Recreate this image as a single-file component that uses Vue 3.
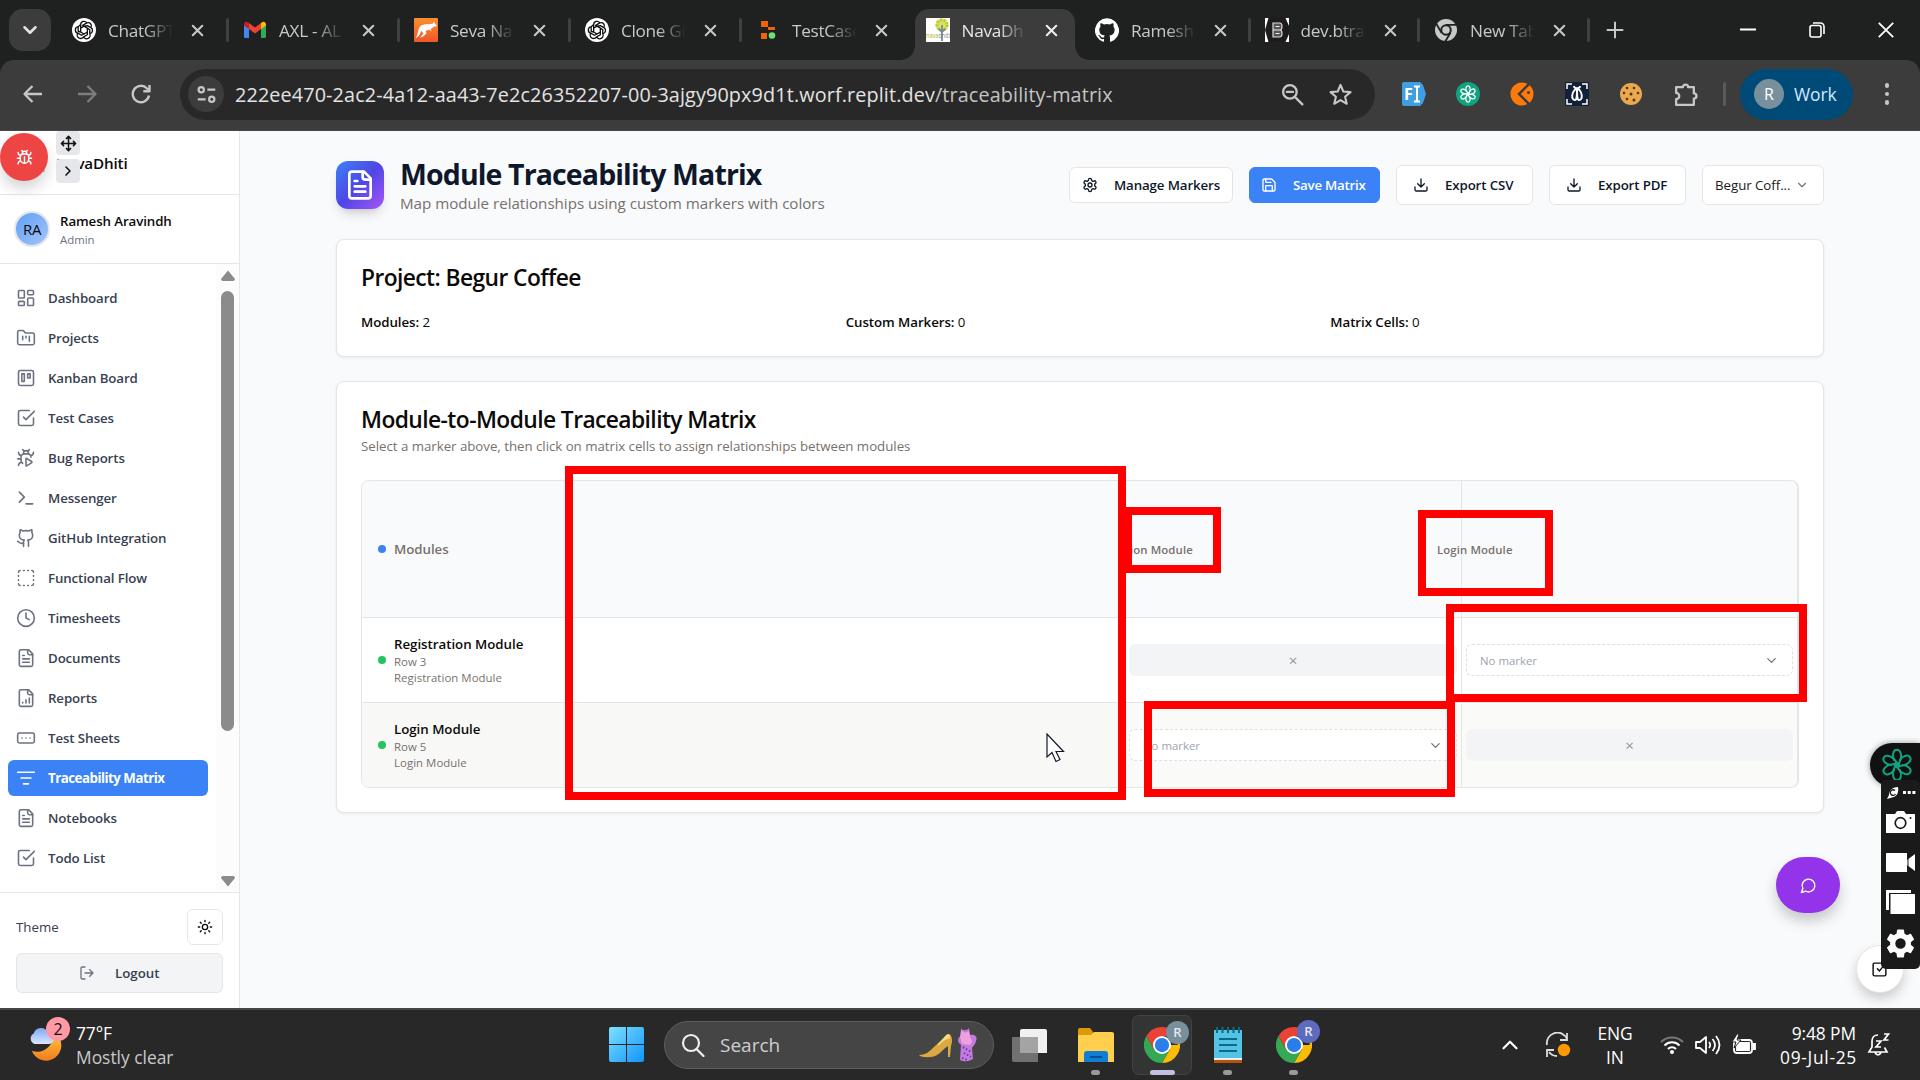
<script setup>
import { h } from 'vue'

const paths = {
  dashboard: '<rect width="7" height="9" x="3" y="3" rx="1"/><rect width="7" height="5" x="14" y="3" rx="1"/><rect width="7" height="9" x="14" y="12" rx="1"/><rect width="7" height="5" x="3" y="16" rx="1"/>',
  projects: '<path d="M4 20h16a2 2 0 0 0 2-2V8a2 2 0 0 0-2-2h-7.93a2 2 0 0 1-1.66-.9l-.82-1.2A2 2 0 0 0 7.93 3H4a2 2 0 0 0-2 2v13c0 1.1.9 2 2 2Z"/><path d="M8 10v4M12 10v2M16 10v6"/>',
  kanban: '<rect width="18" height="18" x="3" y="3" rx="2"/><rect width="3" height="9" x="7" y="7"/><rect width="3" height="5" x="14" y="7"/>',
  check: '<path d="m9 11 3 3L22 4"/><path d="M21 12v7a2 2 0 0 1-2 2H5a2 2 0 0 1-2-2V5a2 2 0 0 1 2-2h11"/>',
  bugplay: '<path d="M12.765 21.522a.5.5 0 0 1-.765-.424v-8.196a.5.5 0 0 1 .765-.424l5.878 3.674a1 1 0 0 1 0 1.696z"/><path d="M14.12 3.88 16 2M18 11a4 4 0 0 0-4-4h-4a4 4 0 0 0-4 4v3a6.1 6.1 0 0 0 2 4.5M20.97 5c0 2.1-1.6 3.8-3.5 4M3 21c0-2.1 1.7-3.9 3.8-4M6 13H2M6.53 9C4.6 8.8 3 7.1 3 5m5-3 1.88 1.88M9 7.13v-1a3 3 0 1 1 6 0v1"/>',
  messenger: '<path d="m4 17 6-6-6-6M12 19h8"/>',
  github: '<path d="M15 22v-4a4.8 4.8 0 0 0-1-3.5c3 0 6-2 6-5.500.08-1.250-.27-2.480-1-3.500.28-1.150.28-2.350 0-3.500 0 0-1 0-3 1.500-2.640-.5-5.360-.5-8 0C6 2 5 2 5 2c-.3 1.150-.3 2.350 0 3.500A5.400 5.400 0 0 0 4 9c0 3.500 3 5.500 6 5.500-.39.49-.68 1.050-.85 1.650S8.930 17.380 9 18v4"/><path d="M9 18c-4.510 2-5-2-7-2"/>',
  flow: '<path d="M5 3a2 2 0 0 0-2 2M19 3a2 2 0 0 1 2 2M21 19a2 2 0 0 1-2 2M5 21a2 2 0 0 1-2-2M9 3h1M9 21h1M14 3h1M14 21h1M3 9v1M21 9v1M3 14v1M21 14v1"/>',
  clock: '<circle cx="12" cy="12" r="10"/><path d="M12 6v6l4 2"/>',
  doc: '<path d="M15 2H6a2 2 0 0 0-2 2v16a2 2 0 0 0 2 2h12a2 2 0 0 0 2-2V7Z"/><path d="M14 2v4a2 2 0 0 0 2 2h4M10 9H8M16 13H8M16 17H8"/>',
  report: '<path d="M15 2H6a2 2 0 0 0-2 2v16a2 2 0 0 0 2 2h12a2 2 0 0 0 2-2V7Z"/><path d="M14 2v4a2 2 0 0 0 2 2h4M8 18v-1M12 18v-4M16 18v-6"/>',
  sheets: '<rect width="20" height="12" x="2" y="6" rx="2"/><path d="M12 12h.01M17 12h.01M7 12h.01"/>',
  matrix: '<path d="M2 5h20M6 12h12M9 19h6"/>',
  bug: '<path d="m8 2 1.880 1.880M14.120 3.880 16 2M9 7.130v-1a3 3 0 1 1 6 0v1M12 20c-3.300 0-6-2.700-6-6v-3a4 4 0 0 1 4-4h4a4 4 0 0 1 4 4v3c0 3.300-2.700 6-6 6M12 20v-9M6.530 9C4.600 8.800 3 7.100 3 5M6 13H2M3 21c0-2.100 1.700-3.900 3.800-4M20.970 5c0 2.100-1.600 3.800-3.500 4M22 13h-4M17.200 17c2.100.1 3.800 1.900 3.800 4"/>',
  move: '<path d="M12 2v20M15 19l-3 3-3-3M19 9l3 3-3 3M2 12h20M5 9l-3 3 3 3M9 5l3-3 3 3"/>',
  right: '<path d="m9 18 6-6-6-6"/>',
  down: '<path d="m6 9 6 6 6-6"/>',
  up: '<path d="m6 15 6-6 6 6"/>',
  x: '<path d="M18 6 6 18M6 6l12 12"/>',
  plus: '<path d="M3 12h18M12 3v18"/>',
  sun: '<circle cx="12" cy="12" r="4"/><path d="M12 2v2M12 20v2M4.930 4.930l1.410 1.410M17.660 17.660l1.410 1.410M2 12h2M20 12h2M6.340 17.660l-1.410 1.410M19.070 4.930l-1.410 1.410"/>',
  logout: '<path d="M9 21H5a2 2 0 0 1-2-2V5a2 2 0 0 1 2-2h4M16 17l5-5-5-5M21 12H9"/>',
  gear: '<path d="M12.220 2h-.44a2 2 0 0 0-2 2v.18a2 2 0 0 1-1 1.730l-.43.25a2 2 0 0 1-2 0l-.15-.08a2 2 0 0 0-2.730.73l-.22.38a2 2 0 0 0 .73 2.730l.15.1a2 2 0 0 1 1 1.720v.51a2 2 0 0 1-1 1.740l-.15.09a2 2 0 0 0-.73 2.730l.22.38a2 2 0 0 0 2.730.73l.15-.08a2 2 0 0 1 2 0l.43.25a2 2 0 0 1 1 1.730V20a2 2 0 0 0 2 2h.44a2 2 0 0 0 2-2v-.18a2 2 0 0 1 1-1.730l.43-.25a2 2 0 0 1 2 0l.15.08a2 2 0 0 0 2.730-.73l.22-.39a2 2 0 0 0-.73-2.730l-.15-.08a2 2 0 0 1-1-1.740v-.5a2 2 0 0 1 1-1.740l.15-.09a2 2 0 0 0 .73-2.730l-.22-.38a2 2 0 0 0-2.730-.73l-.15.08a2 2 0 0 1-2 0l-.43-.25a2 2 0 0 1-1-1.730V4a2 2 0 0 0-2-2z"/><circle cx="12" cy="12" r="3"/>',
  save: '<path d="M15.200 3a2 2 0 0 1 1.400.6l3.800 3.800a2 2 0 0 1 .6 1.400V19a2 2 0 0 1-2 2H5a2 2 0 0 1-2-2V5a2 2 0 0 1 2-2z"/><path d="M17 21v-7a1 1 0 0 0-1-1H8a1 1 0 0 0-1 1v7M7 3v4a1 1 0 0 0 1 1h7"/>',
  download: '<path d="M21 15v4a2 2 0 0 1-2 2H5a2 2 0 0 1-2-2v-4M7 10l5 5 5-5M12 15V3"/>',
  chat: '<path d="M7.900 20A9 9 0 1 0 4 16.100L2 22Z"/>',
  todo: '<rect x="3" y="3" width="18" height="18" rx="2"/><path d="m9 11 3 3 4-5"/>',
  back: '<path d="M21 12H4M11.500 4 3.500 12l8 8"/>',
  forward: '<path d="M3 12h17M12.500 4l8 8-8 8"/>',
  reload: '<path d="M20 13.500A8.200 8.200 0 1 1 18 6.500L20.500 9M20.500 3v6.200h-6.200"/>',
  tune: '<circle cx="6" cy="6.500" r="3"/><path d="M13 6.500h9M2 17.500h9"/><circle cx="18" cy="17.500" r="3"/>',
  lens: '<circle cx="9.500" cy="9.500" r="6.500"/><path d="m14.500 14.500 7 7M6.500 9.500h6"/>',
  star: '<path d="m12 2.800 2.700 6.300 6.900.6-5.200 4.500 1.600 6.700-6-3.600-6 3.600 1.600-6.700-5.200-4.500 6.900-.6z"/>',
  puzzle: '<path d="M3 5h6.500a2.500 2.500 0 0 1 5 0H20v6a2.500 2.500 0 0 1 0 5v6H3v-5.500a3 3 0 0 0 0-6z"/>',
  search: '<circle cx="10" cy="10" r="8"/><path d="m15.500 16 7 7"/>',
  openai: '<path d="M8 9.700V5.500a4 4 0 0 1 7.400-2l-5 2.900M8 9.700l4-2.400 4 2.400v4.700l-4 2.400-4-2.400zM15.400 3.500a4 4 0 0 1 5 5.700L16 6.700l-4 .6M20.400 9.200a4 4 0 0 1-1.500 7.300v-4.800L16 9.700M18.900 16.500a4 4 0 0 1-7.400 3.800l4.500-2.600v-3.300M11.500 20.300a4 4 0 0 1-7-4.500l4.500 2.500 3-1.500M4.500 15.800A4 4 0 0 1 5 8v5.500l3 1M5 8l3-2.500"/>',
  petals: [0, 60, 120, 180, 240, 300].map((a) => `<path d="M10 8.500C8.300 5 9.300 1.300 12 1.300c2.400 0 3.400 3.200 2.600 6.700l-1 2.600" transform="rotate(${a} 12 12)"/>`).join('') + '<circle cx="12" cy="12" r="1.600" fill="currentColor"/>',
}

const Icon = (p) =>
  h('svg', {
    width: p.size, height: p.size, viewBox: '0 0 24 24', fill: 'none', stroke: 'currentColor',
    'stroke-width': p.sw || 2, 'stroke-linecap': p.cap || 'round', 'stroke-linejoin': 'round', innerHTML: paths[p.name],
  })
Icon.props = ['name', 'size', 'sw', 'cap']

const Chrome = (p) =>
  h('svg', {
    width: p.size, height: p.size, viewBox: '0 0 48 48',
    innerHTML: p.mono
      ? '<circle cx="24" cy="24" r="22" fill="#c7c9c8"/><circle cx="24" cy="24" r="11.500" fill="#1f2120"/><circle cx="24" cy="24" r="7.500" fill="#c7c9c8"/><path d="M24 13.500h21M15 29.500 4.500 11.500M33 29.500 22.500 47" stroke="#1f2120" stroke-width="3.500"/>'
      : '<path d="M24 24h20.800L44.800 12A24 24 0 0 1 24 48l10.400-18z" fill="#fbbc04"/><path d="M24 24 34.400 30 24 48A24 24 0 0 1 3.200 12l10.400 18z" fill="#34a853"/><path d="M3.200 12A24 24 0 0 1 44.800 12H24v12L13.600 30z" fill="#ea4335"/><circle cx="24" cy="24" r="12" fill="#fff"/><circle cx="24" cy="24" r="9.500" fill="#2b7de9"/>',
  })
Chrome.props = ['size', 'mono']

const tabs = [
  { icon: 'gpt', label: 'ChatGPT' },
  { icon: 'gmail', label: 'AXL - AL' },
  { icon: 'kangaroo', label: 'Seva Na' },
  { icon: 'gpt', label: 'Clone Gi' },
  { icon: 'replit', label: 'TestCase', bare: true },
  { icon: 'nava', label: 'NavaDh', active: true },
  { icon: 'gh', label: 'Ramesh' },
  { icon: 'dev', label: 'dev.btra' },
  { icon: 'chrome', label: 'New Tab' },
]
const nav = [
  ['dashboard', 'Dashboard'], ['projects', 'Projects'], ['kanban', 'Kanban Board'], ['check', 'Test Cases'],
  ['bugplay', 'Bug Reports'], ['messenger', 'Messenger'], ['github', 'GitHub Integration'], ['flow', 'Functional Flow'],
  ['clock', 'Timesheets'], ['doc', 'Documents'], ['report', 'Reports'], ['sheets', 'Test Sheets'],
  ['matrix', 'Traceability Matrix'], ['doc', 'Notebooks'], ['check', 'Todo List'],
]
const rows = [
  { name: 'Registration Module', row: 'Row 3', self: 0 },
  { name: 'Login Module', row: 'Row 5', self: 1 },
]
const stats = [['Modules:', 2], ['Custom Markers:', 0], ['Matrix Cells:', 0]]
</script>

<template>
  <div class="screen">
    <header class="tabstrip">
      <button class="tab-search"><Icon name="down" size="22" sw="2.800" /></button>
      <div class="tabs">
        <div v-for="t in tabs" :key="t.label" class="tab" :class="{ active: t.active, bare: t.bare || t.active }">
          <span class="fav">
            <span v-if="t.icon === 'gpt'" class="gpt"><Icon name="openai" size="20" sw="1.600" /></span>
            <svg v-else-if="t.icon === 'gmail'" width="24" height="24" viewBox="0 0 24 24"><path d="M1 6v12.500A1.500 1.500 0 0 0 2.500 20H6V9z" fill="#4285f4" /><path d="M23 6v12.500a1.500 1.500 0 0 1-1.500 1.500H18V9z" fill="#34a853" /><path d="M6 5v6l6 4.500 6-4.500V5l-6 4.500z" fill="#ea4335" /><path d="M1 6.500C1 4 3.500 3.100 5.300 4.500L6 5v6L1 7.500z" fill="#c5221f" /><path d="M23 6.500c0-2.500-2.500-3.400-4.300-2L18 5v6l5-3.500z" fill="#fbbc04" /></svg>
            <svg v-else-if="t.icon === 'kangaroo'" width="24" height="24" viewBox="0 0 24 24"><defs><linearGradient id="kg" x1="0" y1="0" x2="0" y2="1"><stop stop-color="#f9902f" /><stop offset="1" stop-color="#f0562a" /></linearGradient></defs><rect width="24" height="24" rx="1" fill="url(#kg)" /><path d="M1.500 20C4.500 17 3.500 10 7 7.500 11 5 15 7 19 5.500L20 3.500l.8 2 2.200 2.200c-.8 1-2.300.5-3.300 1-.7 1-2.200 1.500-3 2.300l.8 2.500-2-1.800c-1.500.3-3 .5-4 2l1.200 1.500-3.200 3-3.500 1.500 2-2.500 1.500-2c-1-.5-1.800-1.500-2.300-2.700C6.200 15.500 5 19 1.500 20z" fill="#fff" /></svg>
            <svg v-else-if="t.icon === 'replit'" width="24" height="24" viewBox="0 0 24 24"><path d="M5 3h7v6H5zM12 9h7v3h-7zM5 15h6v6H5z" fill="#f26207" /><circle cx="16" cy="17.500" r="3.300" fill="#6be07a" /></svg>
            <svg v-else-if="t.icon === 'nava'" width="24" height="24" viewBox="0 0 24 24"><path fill="#fff" d="M0 0h24v24H0z" /><circle cx="16" cy="7" r="6.500" fill="#d9e36a" /><circle cx="16" cy="7" r="5" fill="none" stroke="#b9c92e" stroke-dasharray="2 1.500" stroke-width="3" /><path d="M16 7v16M13 11l3 3 3-3" stroke="#7c8794" stroke-width="1.800" fill="none" /><text x="0" y="20" font-size="7" textLength="24" lengthAdjust="spacingAndGlyphs" fill="#a4b52a">nava<tspan fill="#7c8794">dhiti</tspan></text></svg>
            <svg v-else-if="t.icon === 'gh'" width="24" height="24" viewBox="0 0 24 24"><path fill="#fff" d="M12 .3a12 12 0 0 0-3.800 23.400c.6.1.8-.3.8-.6v-2c-3.300.7-4-1.600-4-1.600-.6-1.400-1.400-1.800-1.400-1.800-1-.7.1-.7.1-.7 1.200 0 1.900 1.200 1.900 1.200 1 1.800 2.800 1.300 3.500 1 0-.8.4-1.300.7-1.600-2.700-.3-5.500-1.300-5.500-6 0-1.200.5-2.300 1.300-3.100-.2-.4-.6-1.600 0-3.200 0 0 1-.3 3.400 1.200a11.500 11.500 0 0 1 6 0c2.300-1.500 3.300-1.200 3.300-1.200.6 1.600.2 2.800 0 3.200.9.8 1.300 1.900 1.300 3.200 0 4.600-2.800 5.600-5.500 5.900.5.4.9 1 .9 2.200v3.300c0 .3.1.7.8.6A12 12 0 0 0 12 .3" /></svg>
            <svg v-else-if="t.icon === 'dev'" width="24" height="24" viewBox="0 0 24 24"><path fill="#fff" d="M0 0h24v24H0z" /><path d="M3.500 0h17L24 8v8l-3.500 8h-17L0 12z" fill="#1d1b1c" /><path d="M8 5h6.500q2.500 0 2.500 3.500t-2 3.500q2 0 2 3.500T14.500 19H8z" fill="#555" stroke="#ddd" stroke-width="1.200" /><path d="M10.500 8.500h4M10.500 15.500h4M8 12h7" stroke="#eee" stroke-width="1.200" /></svg>
            <Chrome v-else :size="24" :mono="true" />
          </span>
          <span class="tab-label">{{ t.label }}</span>
          <Icon class="tab-x" name="x" size="19" sw="2.600" />
        </div>
      </div>
      <Icon class="newtab" name="plus" size="20" sw="2.400" />
      <div class="winctl">
        <svg width="16" height="16"><path d="M0 7.500h16" stroke="#fff" stroke-width="2" /></svg>
        <svg width="16" height="16" fill="none" stroke="#fff" stroke-width="1.600"><rect x="1" y="3.500" width="11" height="11.500" rx="2" /><path d="M4 1h7.500a3.500 3.500 0 0 1 3.500 3.500V12" /></svg>
        <svg width="16" height="16"><path d="m.8.8 14.400 14.400M15.200.8.8 15.200" stroke="#fff" stroke-width="1.800" /></svg>
      </div>
    </header>

    <div class="toolbar">
      <div class="navbtns">
        <Icon name="back" size="24" sw="2.300" cap="butt" />
        <Icon class="dim" name="forward" size="24" sw="2.300" cap="butt" />
        <Icon name="reload" size="24" sw="2.400" cap="butt" />
      </div>
      <div class="omnibox">
        <span class="siteinfo"><Icon name="tune" size="21" sw="2.500" cap="butt" /></span>
        <span class="url">222ee470-2ac2-4a12-aa43-7e2c26352207-00-3ajgy90px9d1t.worf.replit.dev<i>/traceability-matrix</i></span>
        <Icon class="lens" name="lens" size="25" sw="2.200" />
        <Icon name="star" size="25" sw="2" />
      </div>
      <div class="exts">
        <svg width="24" height="24" viewBox="0 0 24 24"><path d="M2 0h16l3 3 3 9-3 9-3 3H2a2 2 0 0 1-2-2V2a2 2 0 0 1 2-2z" fill="#3f9fe0" /><text x="2" y="18" font-size="16" font-weight="700" fill="#fff">F</text><path d="M12 4.500h6M12 19.500h6M15 4.500v15" stroke="#fff" stroke-width="2" /></svg>
        <span class="ext-gpt"><Icon name="petals" size="18" sw="1.700" /></span>
        <svg width="24" height="24" viewBox="0 0 24 24"><circle cx="12" cy="12" r="11.500" fill="#ff7a0a" /><path d="M19 2 9 12l10 10" fill="none" stroke="#3c3c3c" stroke-width="2.500" /><circle cx="18.500" cy="10.500" r="1.500" fill="#3c3c3c" /></svg>
        <svg width="24" height="24" viewBox="0 0 24 24" fill="none" stroke="#fff" stroke-width="1.500"><path d="M0 0h24v24H0z" fill="#13203a" stroke="none" /><path d="M2 7V2h5M17 2h5v5M22 17v5h-5M7 22H2v-5" /><path d="M9 4c0 3 6 3 6 0M12 6c-6 4-6 12-2 12 2 0 2-5 2-12 0 7 0 12 2 12 4 0 4-8-2-12" stroke-width="1.900" /></svg>
        <svg width="24" height="24" viewBox="0 0 24 24"><circle cx="12" cy="12" r="11" fill="#e9a94c" /><g fill="#5d2f12"><circle cx="8" cy="6" r="1.300" /><circle cx="15" cy="6" r="1.300" /><circle cx="5" cy="11" r="1.300" /><circle cx="12" cy="12" r="1.500" /><circle cx="19" cy="11" r="1.300" /><circle cx="8" cy="17" r="1.300" /><circle cx="15" cy="18" r="1.500" /></g></svg>
        <Icon name="puzzle" size="25" sw="2.200" />
      </div>
      <i class="vsep" />
      <div class="profile"><b>R</b>Work</div>
      <div class="kebab"><i /><i /><i /></div>
    </div>

    <div class="page">
      <aside class="sidebar">
        <div class="brand"><small>iti</small><strong>NavaDhiti</strong></div>
        <div class="user">
          <span class="avatar">RA</span>
          <div><strong>Ramesh Aravindh</strong><small>Admin</small></div>
        </div>
        <div class="navwrap">
          <nav>
            <a v-for="n in nav" :key="n[1]" :class="{ on: n[0] === 'matrix' }"><Icon :name="n[0]" size="20" sw="1.900" /><span>{{ n[1] }}</span></a>
          </nav>
          <div class="scrollbar">
            <svg width="14" height="11"><path d="M7 .5 14 9q0 2-2 2H2Q0 11 0 9z" fill="#8b8b8b" /></svg>
            <i />
            <svg width="14" height="11"><path d="M7 10.500 14 2q0-2-2-2H2Q0 0 0 2z" fill="#8b8b8b" /></svg>
          </div>
        </div>
        <div class="sidefoot">
          <div class="theme"><span>Theme</span><button><Icon name="sun" size="16" /></button></div>
          <button class="logout"><Icon name="logout" size="16" /><span>Logout</span></button>
        </div>
      </aside>

      <main>
        <div class="head">
          <span class="logo"><Icon name="doc" size="32" sw="2" /></span>
          <div class="titles"><h1>Module Traceability Matrix</h1><p>Map module relationships using custom markers with colors</p></div>
          <div class="actions">
            <button class="b1"><Icon name="gear" size="16" /><span>Manage Markers</span></button>
            <button class="b2"><Icon name="save" size="16" /><span>Save Matrix</span></button>
            <button class="b3"><Icon name="download" size="16" /><span>Export CSV</span></button>
            <button class="b3"><Icon name="download" size="16" /><span>Export PDF</span></button>
            <button class="sel"><span>Begur Coff...</span><Icon name="down" size="14" /></button>
          </div>
        </div>

        <section class="card c1">
          <h2>Project: Begur Coffee</h2>
          <div class="stats"><span v-for="s in stats" :key="s[0]"><b>{{ s[0] }}</b> {{ s[1] }}</span></div>
        </section>

        <section class="card c2">
          <h2>Module-to-Module Traceability Matrix</h2>
          <p>Select a marker above, then click on matrix cells to assign relationships between modules</p>
          <div class="matrix">
            <div class="mrow mhead">
              <div class="mlabel"><i class="dot blue" /><span>Modules</span></div>
              <div class="mcell"><span class="h1c">ion Module</span></div>
              <div class="mcell"><span class="h2c">Login Module</span></div>
            </div>
            <div v-for="r in rows" :key="r.name" class="mrow">
              <div class="mlabel"><i class="dot" /><div><b>{{ r.name }}</b><small>{{ r.row }}</small><small>{{ r.name }}</small></div></div>
              <div v-for="c in 2" :key="c" class="mcell">
                <div v-if="r.self === c - 1" class="self">×</div>
                <div v-else class="pick"><span>No marker</span><Icon name="down" size="15" sw="2" /></div>
              </div>
            </div>
          </div>
        </section>
      </main>
    </div>

    <footer class="taskbar">
      <div class="weather">
        <svg width="40" height="42" viewBox="0 0 42 42"><defs><linearGradient id="mo" x1="0" y1="0" x2="0" y2="1"><stop stop-color="#ffc93c" /><stop offset="1" stop-color="#f07b1d" /></linearGradient><linearGradient id="cl" x1="0" y1="0" x2="0" y2="1"><stop stop-color="#7fa8f5" /><stop offset="1" stop-color="#dbe8ff" /></linearGradient></defs><path d="M29 9A16 16 0 1 1 4 27c11 4 21-3 25-18z" fill="url(#mo)" /><path d="M7 20a6 6 0 0 1-1-11 8 8 0 0 1 15-1 6 6 0 0 1 1 12z" fill="url(#cl)" /></svg>
        <b class="wbadge">2</b>
        <div class="wtext"><span>77°F</span><span>Mostly clear</span></div>
      </div>
      <svg class="win" width="35" height="35" viewBox="0 0 35 35"><defs><linearGradient id="wi" x1="0" y1="0" x2="1" y2="1"><stop stop-color="#7fe0ff" /><stop offset="1" stop-color="#0f95fb" /></linearGradient></defs><path d="M2 0h15v17H0V2Q0 0 2 0zM18 0h15q2 0 2 2v15H18zM0 18h17v17H2q-2 0-2-2zM18 18h17v15q0 2-2 2H18z" fill="url(#wi)" /></svg>
      <div class="search">
        <Icon name="search" size="24" sw="2.200" /><span>Search</span>
        <svg width="60" height="36" viewBox="0 0 60 36"><path d="M1 28c7 0 11-4 16-9C23 14 28 7 31 7c3 1 4 7 2 12l-1 11h-2V19c-4 2-7 7-11 9-4 3-16 3-18 0z" fill="#dba941" /><path d="M20 17c5-4 8-10 10-10 2 1 2 3 2 5-4-1-8 4-12 7z" fill="#f4d98b" /><path d="M43 1c1 3 6 3 8 0l1 7c5-1 8 2 6 6-1 4-3 5-4 7l1 11q-7 4-13 1l1-15c-4-3-4-7 0-9z" fill="#c47be0" /><path d="M43 3c2 3 6 3 8 1l1 6c2 3 3 5 0 8l-8-1-2-7z" fill="#efa0dd" /><path d="m45 20 8 5M46 26l7 4M44 31l6 2" stroke="#6d38a0" stroke-width="2" stroke-dasharray="1.500 2" /></svg>
      </div>
      <div class="apps">
        <span class="app"><svg width="38" height="36" viewBox="0 0 38 36"><path d="M11 2h23a2 2 0 0 1 2 2v22H9V4q0-2 2-2z" fill="#f1f1f1" /><path d="M2 10h25v17H27v8H3q-2 0-2-2V11q0-1 1-1z" fill="#8a8a8a" opacity=".75" /></svg></span>
        <span class="app"><svg width="38" height="36" viewBox="0 0 38 36"><path d="M1 3q0-2 2-2h10l3 4v6H1z" fill="#dc9a06" /><path d="M1 8h13l3-3h18q2 0 2 2v28H1z" fill="#ffcf4d" /><path d="M7 35V27q0-3 3-3h18q3 0 3 3v8z" fill="#0f7fd6" /><path d="M13 30h12" stroke="#0a4f92" stroke-width="2" /></svg><i class="run" /></span>
        <span class="app live"><Chrome :size="36" /><b class="pb grey">R</b><i class="run" /></span>
        <span class="app"><svg width="30" height="38" viewBox="0 0 30 38"><path d="M1 4h28v28H1z" fill="#55c3e3" /><path d="M1 32h28v2H1z" fill="#eee" /><path d="M1 34h28v2q0 1-1 1H2q-1 0-1-1z" fill="#b5540f" /><path d="M6 13h18M6 19h18M6 25h18" stroke="#0b6a8c" stroke-width="2.200" /><path d="M4 1v6M9.500 1v6M15 1v6M20.500 1v6M26 1v6" stroke="#0b6a8c" stroke-width="2" /></svg><i class="run" /></span>
        <span class="app"><Chrome :size="36" /><b class="pb indigo">R</b><i class="run" /></span>
      </div>
      <div class="tray">
        <Icon class="t-up" name="up" size="26" sw="2" />
        <svg class="t-sync" width="26" height="26" viewBox="0 0 26 26" fill="none" stroke="#ddd" stroke-width="1.800"><path d="M2 13A10.500 10.500 0 0 1 22 7M22 1v7h-7M12 24a10 10 0 0 1-8-4M2 25v-7h7" /><circle cx="19" cy="18" r="6.200" fill="#ff9800" stroke="none" /></svg>
        <div class="lang"><span>ENG</span><span>IN</span></div>
        <svg class="t-wifi" width="24" height="20" viewBox="0 0 24 20" fill="none" stroke="#fff" stroke-width="2"><path d="M1 7a15.500 15.500 0 0 1 22 0" stroke="#777" /><path d="M4.500 10.500a10.500 10.500 0 0 1 15 0M8 14a5.500 5.500 0 0 1 8 0" /><circle cx="12" cy="17" r="2" fill="#fff" stroke="none" /></svg>
        <svg class="t-vol" width="26" height="22" viewBox="0 0 26 22" fill="none" stroke="#fff" stroke-width="1.800"><path d="M1 8v6h4l6 5V3L5 8z" stroke-linejoin="round" /><path d="M14 8q2.500 3 0 6M17.500 5q5 6 0 12M21 2q7 9 0 18" /></svg>
        <svg class="t-bat" width="26" height="22" viewBox="0 0 26 22" fill="none" stroke="#fff" stroke-width="1.800"><rect x="3" y="6" width="18" height="13" rx="3" /><path d="M6 9h12v7H6z" fill="#fff" /><path d="M22 10h2v5h-2" fill="#fff" /><path d="M6 0 1 8h4l-2 6 7-8H6l2-6z" fill="#fff" stroke="#282828" stroke-width="1" /></svg>
        <div class="time"><span>9:48 PM</span><span>09-Jul-25</span></div>
        <svg class="t-bell" width="24" height="26" viewBox="0 0 24 26" fill="none" stroke="#fff" stroke-width="1.700"><path d="M11 3C7 3 5 6 5 9v6l-3 5h18l-2.500-4.500M8 20.500q3 5 6 0" /><path d="M9 9h5l-5 6h5M17 2h4.500L17 8h4.500" /></svg>
      </div>
    </footer>

    <!-- floating widgets -->
    <span class="bugbtn"><Icon name="bug" size="17" sw="2" /></span>
    <span class="mini m1"><Icon name="move" size="17" sw="2.200" /></span>
    <span class="mini m2"><Icon name="right" size="16" sw="2.400" /></span>
    <span class="chatbtn"><Icon name="chat" size="17" sw="2" /></span>
    <span class="todobtn"><Icon name="todo" size="17" sw="2" /></span>
    <span class="gptpill"><Icon name="petals" size="34" sw="1.400" /></span>
    <div class="recorder">
      <svg width="30" height="14" viewBox="0 0 30 14"><path d="M1 13l2-4c0-5 4-8 9-8 1 5-1 10-6 10.500z" fill="#fff" /><path d="M9 4.500a2.800 2.800 0 1 0 .5 3.500" fill="none" stroke="#1a1a1a" stroke-width="1.300" /><path d="M17 5h3v3h-3zM21.700 5h3v3h-3zM26.400 5h3v3h-3z" fill="#fff" /></svg>
      <svg class="r1" width="29" height="22" viewBox="0 0 29 22"><path d="M0 3h9l2-3h7l2 3h9v19H0z" fill="#fff" /><circle cx="14.500" cy="12" r="5.300" fill="none" stroke="#1a1a1a" stroke-width="1.700" /><circle cx="24.500" cy="7" r="1" fill="#1a1a1a" /></svg>
      <svg class="r2" width="29" height="19" viewBox="0 0 29 19"><path d="M1 0h20v7l8-6v17l-8-6v7H1q-1 0-1-1V1q0-1 1-1z" fill="#fff" /><path d="M22 5v9" stroke="#1a1a1a" /></svg>
      <svg class="r3" width="29" height="24" viewBox="0 0 29 24"><path d="M0 0h25v3H3v17H0z" fill="#fff" /><path d="M4.500 4H29v20H4.500z" fill="#fff" /></svg>
      <svg class="r4" width="29" height="29" viewBox="2 2 20 20"><path fill="#fff" d="M19.140 12.940c.04-.3.06-.61.06-.94s-.02-.64-.07-.94l2.030-1.580a.49.49 0 0 0 .12-.61l-1.920-3.320a.49.49 0 0 0-.59-.22l-2.390.96c-.5-.38-1.030-.7-1.620-.94l-.36-2.540a.48.48 0 0 0-.48-.41h-3.840c-.24 0-.43.17-.47.41l-.36 2.540c-.59.24-1.130.57-1.620.94l-2.390-.96a.48.48 0 0 0-.59.22L2.740 8.870a.48.48 0 0 0 .12.61l2.030 1.580c-.05.3-.09.63-.09.94s.02.64.07.94l-2.030 1.580a.49.49 0 0 0-.12.61l1.920 3.320c.12.22.37.29.59.22l2.390-.96c.5.38 1.030.7 1.620.94l.36 2.540c.05.24.24.41.48.41h3.840c.24 0 .44-.17.47-.41l.36-2.540c.59-.24 1.130-.56 1.620-.94l2.390.96c.22.08.47 0 .59-.22l1.920-3.320a.48.48 0 0 0-.12-.61zM12 15.600a3.600 3.600 0 1 1 0-7.200 3.600 3.600 0 0 1 0 7.200z" /></svg>
    </div>

    <!-- annotations -->
    <i class="mark ma" /><i class="mark mb" /><i class="mark mc" /><i class="mark md" /><i class="mark me" />
    <svg class="cursor" width="19" height="30" viewBox="0 0 19 30"><path d="M1 1v23l5-4.500 4 9 4-2-4-8h7.500z" fill="#fff" stroke="#111827" stroke-width="1.200" /></svg>
  </div>
</template>

<style>
html, body { margin: 0; overflow: hidden; background: #282828; }
</style>

<style scoped>
* { box-sizing: border-box; }
svg { display: block; flex: none; }
button { font: inherit; margin: 0; padding: 0; border: 0; display: flex; align-items: center; }
i { font-style: normal; }
span, b, strong, small, h1, h2, p { white-space: nowrap; }
.screen { position: relative; width: 1920px; height: 1080px; display: flex; flex-direction: column; overflow: hidden; font-family: "Open Sans", "Noto Sans", sans-serif; color: #0c0a09; background: #1f2120; }

.tabstrip { height: 60px; flex: none; display: flex; align-items: center; padding-left: 9px; color: #c7c9c8; background: #1f2120; }
.tab-search { width: 42px; height: 42px; border-radius: 14px; background: #3c3c3c; color: #e3e3e3; justify-content: center; }
.tabs { display: flex; margin-left: 6px; height: 60px; }
.tab { position: relative; width: 171px; height: 60px; display: flex; align-items: center; padding-left: 15px; }
.tab:nth-child(n+5) { width: 169.500px; }
.tab:not(.bare)::after { content: ""; position: absolute; right: -1px; top: 18px; width: 3px; height: 24px; border-radius: 2px; background: #3f4140; }
.tab.active::before { content: ""; position: absolute; left: 4px; right: 5px; top: 9px; bottom: 0; background: #3c3c3c; border-radius: 14px 14px 0 0; }
.tab.active::after { content: ""; position: absolute; display: block; left: -10px; right: -9px; top: auto; width: auto; bottom: 0; height: 14px; border-radius: 0; background: radial-gradient(circle at 0 0, transparent 13.500px, #3c3c3c 14px) left / 14px 14px no-repeat, radial-gradient(circle at 100% 0, transparent 13.500px, #3c3c3c 14px) right / 14px 14px no-repeat; }
.tab > * { position: relative; z-index: 1; }
.fav { width: 24px; height: 24px; }
.gpt { width: 24px; height: 24px; border-radius: 50%; background: #fff; color: #111; display: flex; align-items: center; justify-content: center; }
.tab-label { width: 66px; margin-left: 12px; overflow: hidden; font-size: 17.200px; line-height: 26px; padding-top: 2px; letter-spacing: -.3px; -webkit-mask-image: linear-gradient(90deg, #000 55%, transparent 98%); mask-image: linear-gradient(90deg, #000 55%, transparent 98%); }
.active .tab-label { color: #e6e6e6; }
.tab-x { margin-left: 14px; }
.active .tab-x { color: #eee; }
.newtab { margin-left: 16px; }
.winctl { margin-left: auto; margin-right: 26px; display: flex; gap: 53px; }

.toolbar { height: 71px; flex: none; background: #3c3c3c; border-radius: 14px 14px 0 0; display: flex; align-items: center; padding: 0 0 2px 21px; color: #c7c7c7; border-bottom: 1px solid #48484a; }
.navbtns { display: flex; gap: 30px; }
.dim { color: #7d7d7d; }
.omnibox { margin-left: 27px; width: 1195px; height: 51px; border-radius: 26px; background: #282828; display: flex; align-items: center; padding: 0 22px 0 8px; }
.siteinfo { width: 36px; height: 36px; border-radius: 50%; background: #3c3c3c; display: flex; align-items: center; justify-content: center; }
.url { margin-left: 11px; font-size: 19.800px; color: #e3e3e3; flex: 1; letter-spacing: .13px; }
.url i { color: #c4c4c4; }
.lens { margin-right: 23px; }
.exts { display: flex; gap: 30.200px; margin-left: 27px; align-items: center; }
.ext-gpt { width: 24px; height: 24px; border-radius: 50%; background: #10a37f; color: #fff; display: flex; align-items: center; justify-content: center; }
.vsep { width: 3px; height: 24px; background: #5a5a5a; margin-left: 25px; border-radius: 2px; }
.profile { margin-left: 14px; width: 113px; height: 51px; border-radius: 26px; background: #004a77; color: #d3e8fb; font-size: 17.500px; display: flex; align-items: center; padding-left: 14px; letter-spacing: -.1px; }
.profile b { width: 30px; height: 30px; border-radius: 50%; background: #78909c; color: #fff; font-weight: 400; font-size: 16px; display: flex; align-items: center; justify-content: center; margin-right: 10px; }
.kebab { margin-left: 32px; display: flex; flex-direction: column; gap: 4px; }
.kebab i { width: 4.500px; height: 4.500px; border-radius: 50%; background: #c7c7c7; }

.page { height: 877px; flex: none; display: flex; background: #f8fafc; }
.sidebar { width: 240px; flex: none; background: #fff; border-right: 1px solid #e5e7eb; display: flex; flex-direction: column; }
.brand { height: 64px; flex: none; border-bottom: 1px solid #e5e7eb; display: flex; align-items: center; padding-left: 38px; }
.brand small { font-size: 8px; color: #6b7280; width: 18px; padding-top: 12px; }
.brand strong { font-size: 15.200px; font-weight: 600; letter-spacing: -.15px; }
.user { height: 69px; flex: none; border-bottom: 1px solid #e5e7eb; display: flex; align-items: center; padding-left: 14px; }
.avatar { width: 36px; height: 36px; border-radius: 50%; border: 2px solid #e5e7eb; background: linear-gradient(135deg, #60a0f5, #a5c4fb); display: flex; align-items: center; justify-content: center; font-size: 15px; letter-spacing: -.3px; }
.user div { margin-left: 10px; padding-top: 2px; }
.user strong { display: block; font-size: 13.300px; font-weight: 600; line-height: 18px; letter-spacing: -.1px; }
.user small { display: block; font-size: 11.400px; color: #6b7280; line-height: 19px; }
.navwrap { flex: none; height: 628px; display: flex; justify-content: space-between; }
nav { padding: 16px 0 0 8px; }
nav a { width: 200px; height: 36px; margin-bottom: 4px; border-radius: 6px; display: flex; align-items: center; padding-left: 8px; color: #374151; font-size: 13.300px; font-weight: 600; letter-spacing: -.12px; }
nav a svg { color: #6b7280; }
nav a span { margin-left: 12px; }
nav a.on, nav a.on svg { color: #fff; }
nav a.on { background: #3b82f6; font-weight: 700; letter-spacing: -.5px; }
.scrollbar { width: 23px; background: #fcfcfc; display: flex; flex-direction: column; align-items: center; padding-top: 6px; }
.scrollbar i { width: 13px; height: 440px; background: #8b8b8b; border-radius: 7px; margin: 10px 0 145px; }
.sidefoot { flex: 1; border-top: 1px solid #e5e7eb; padding: 16px 16px 0; }
.theme { display: flex; align-items: center; justify-content: space-between; height: 36px; font-size: 13.300px; color: #374151; }
.theme button { width: 36px; height: 36px; border: 1px solid #e5e7eb; border-radius: 6px; background: #fff; justify-content: center; color: #0c0a09; }
.logout { width: 207px; height: 40px; margin-top: 8px; background: #f3f4f6; border: 1px solid #e5e5e5; border-radius: 6px; color: #374151; font-size: 13.300px; font-weight: 600; padding-left: 62px; }
.logout svg { color: #6b7280; }
.logout span { margin-left: 20px; }

main { width: 1488px; margin-left: 96px; padding-top: 26px; }
.head { display: flex; height: 58px; }
.logo { width: 48px; height: 48px; margin-top: 4px; border-radius: 12px; background: linear-gradient(135deg, #3b82f6, #4f46e5 50%, #a855f7); color: #fff; display: flex; align-items: center; justify-content: center; box-shadow: 0 8px 12px -3px rgba(0,0,0,.14), 0 4px 6px -4px rgba(0,0,0,.12); }
.titles { margin-left: 16px; width: 669px; margin-top: -1px; }
h1 { margin: 0; font-size: 28.500px; line-height: 36px; font-weight: 700; color: #0f172a; letter-spacing: -.88px; }
h1 + p { margin: 0; font-size: 15.200px; line-height: 22px; color: #78716c; letter-spacing: -.04px; }
.actions { display: flex; gap: 16px; align-items: center; height: 55px; font-size: 13.300px; font-weight: 600; letter-spacing: -.15px; }
.actions button { background: #fff; border: 1px solid #e7e5e4; border-radius: 6px; height: 36px; padding-left: 12px; color: #0f172a; letter-spacing: -.13px; }
.actions span { margin-left: 16px; }
.actions .b1 { width: 164px; }
.actions .b2 { width: 131px; background: #3b82f6; border-color: #3b82f6; color: #fff; padding-left: 11px; letter-spacing: -.25px; }
.actions .b3 { width: 137px; height: 40px; padding-left: 16px; }
.actions .sel { width: 122px; height: 40px; padding-left: 12px; font-weight: 400; color: #1c1917; letter-spacing: -.05px; }
.actions .sel span { margin: 0 5px 0 0; }
.actions .sel svg { color: #78716c; }
.card { background: #fff; border: 1px solid #e7e5e4; border-radius: 8px; box-shadow: 0 1px 3px rgba(0,0,0,.07); padding: 0 24px; }
.c1 { height: 118px; margin-top: 24px; padding-top: 21px; }
.c2 { height: 432px; margin-top: 24px; padding-top: 21px; }
h2 { margin: 0; font-size: 22.800px; font-weight: 600; line-height: 34px; letter-spacing: -.58px; }
.stats { display: grid; grid-template-columns: repeat(3, 1fr); column-gap: 16px; margin-top: 17px; font-size: 13.300px; line-height: 20px; letter-spacing: -.06px; }
.stats b { font-weight: 600; }
.c2 p { margin: -1px 0 0; font-size: 13.300px; line-height: 20px; color: #78716c; letter-spacing: -.035px; }
.matrix { margin-top: 24px; border: 1px solid #e5e5e5; border-right-width: 2px; border-radius: 8px; overflow: hidden; width: 1438px; }
.mrow { display: flex; height: 85px; }
.mrow + .mrow { border-top: 1px solid #e5e5e5; }
.mrow:last-child { background: #fafaf9; }
.mhead { height: 136px; background: #f8fafc; }
.mlabel { width: 763px; flex: none; padding-left: 16px; display: flex; align-items: center; }
.mrow:last-child .mlabel { background: #f8f8f6; }
.dot { width: 8px; height: 8px; border-radius: 50%; background: #22c55e; margin-right: 8px; flex: none; }
.blue { background: #3b82f6; }
.mlabel > span { font-size: 13.300px; font-weight: 600; color: #78716c; letter-spacing: -.05px; }
.mlabel b { display: block; font-size: 13.300px; font-weight: 600; line-height: 20px; letter-spacing: -.03px; }
.mlabel small { display: block; font-size: 11.400px; color: #78716c; line-height: 16px; letter-spacing: .05px; }
.mcell { width: 336px; flex: none; padding: 0 4px; display: flex; align-items: center; }
.mcell + .mcell { border-left: 1px solid #e5e5e5; }
.mhead .mcell { padding: 0; font-size: 11.400px; font-weight: 600; color: #78716c; letter-spacing: .1px; }
.h1c { margin-left: 5px; }
.h2c { margin-left: -25px; }
.self, .pick { width: 328px; height: 32px; border-radius: 6px; display: flex; align-items: center; font-size: 11.400px; color: #9ca3af; }
.self { justify-content: center; background: #f3f4f6; font-size: 15px; color: #8d95a3; }
.pick { justify-content: space-between; padding: 0 13px; border: 1px dashed #dfdfdf; background: #fff; }
.pick svg { color: #78716c; }

.taskbar { height: 72px; flex: none; background: #282828; border-top: 2px solid #464646; display: flex; align-items: center; color: #fff; position: relative; padding-bottom: 1px; }
.weather { position: relative; display: flex; width: 609px; padding-left: 28px; align-items: center; }
.wbadge { position: absolute; left: 46px; top: -4px; width: 24px; height: 24px; border-radius: 50%; background: #ff99a4; color: #111; font-size: 16px; font-weight: 400; display: flex; align-items: center; justify-content: center; }
.wtext { display: flex; flex-direction: column; margin-left: 8px; font-size: 17.400px; line-height: 24px; letter-spacing: -.1px; }
.wtext span + span { color: #c8c8c8; letter-spacing: 0; }
.search { margin-left: 20px; width: 330px; height: 48px; border-radius: 24px; background: #454545; border: 1.500px solid #5e5e5e; display: flex; align-items: center; padding-left: 16px; color: #eee; }
.search span { margin-left: 15px; font-size: 19px; color: #cfcfcf; width: 198px; letter-spacing: 0; }
.apps { display: flex; margin-left: 6px; }
.app { position: relative; width: 60px; height: 60px; margin-right: 6px; display: flex; align-items: center; justify-content: center; }
.live { background: #333534; border: 1px solid #424443; border-radius: 7px; }
.run { position: absolute; left: 25px; bottom: 0; width: 9px; height: 5px; border-radius: 3px; background: #9a9a9a; }
.live .run { left: 17px; width: 25px; background: #c3bfe0; bottom: -1px; }
.pb { position: absolute; left: 33px; top: 5px; width: 23px; height: 23px; border-radius: 50%; font-size: 13px; font-weight: 600; display: flex; align-items: center; justify-content: center; color: #e5e8ec; }
.grey { background: #78909c; }
.indigo { background: #5c6bc0; }
.tray { margin-left: auto; display: flex; align-items: center; padding-right: 29px; font-size: 17.400px; line-height: 24px; letter-spacing: -.1px; }
.t-up { margin-right: 22px; }
.t-sync { margin-right: 26px; }
.lang { width: 36px; display: flex; flex-direction: column; align-items: center; margin-right: 27px; }
.t-wifi { margin-right: 11px; }
.t-vol { margin-right: 10px; }
.t-bat { margin-right: 20px; }
.time { width: 79px; display: flex; flex-direction: column; align-items: flex-end; margin-right: 11px; }
.time span + span { letter-spacing: .7px; margin-right: -1px; }

.bugbtn, .mini, .chatbtn, .todobtn, .gptpill { position: absolute; display: flex; align-items: center; justify-content: center; }
.bugbtn { left: 0; top: 133px; width: 48px; height: 48px; border-radius: 50%; background: #ef4444; color: #fff; box-shadow: 0 8px 14px rgba(0,0,0,.16); }
.mini { left: 56px; width: 24px; height: 24px; border-radius: 4px; background: #e5e7eb; color: #111; }
.m1 { top: 131px; }
.m2 { top: 159px; }
.chatbtn { left: 1776px; top: 857px; width: 64px; height: 56px; border-radius: 28px; background: #9333ea; color: #fff; box-shadow: 0 8px 14px rgba(0,0,0,.2); }
.todobtn { left: 1856px; top: 945px; width: 48px; height: 48px; border-radius: 50%; background: #fff; border: 1px solid #e5e5e5; box-shadow: 0 6px 12px rgba(0,0,0,.18); padding-right: 1px; }
.gptpill { left: 1870px; top: 743px; width: 50px; height: 44px; border-radius: 22px 0 0 22px; background: #111; color: #10a37f; box-shadow: 0 0 6px rgba(0,0,0,.4); padding-left: 4px; }
.recorder { position: absolute; left: 1881px; top: 780px; width: 39px; height: 189px; background: #1a1a1a; border-radius: 5px; display: flex; flex-direction: column; align-items: flex-start; padding: 6px 0 0 5px; }
.r1 { margin-top: 11px; }
.r2 { margin-top: 20px; }
.r3 { margin-top: 18px; }
.r4 { margin-top: 15px; }
.mark { position: absolute; border: 8px solid #f00; }
.ma { left: 565px; top: 466px; width: 561px; height: 334px; }
.mb { left: 1124px; top: 507px; width: 97px; height: 66px; }
.mc { left: 1418px; top: 510px; width: 135px; height: 86px; }
.md { left: 1446px; top: 604px; width: 361px; height: 98px; }
.me { left: 1144px; top: 701px; width: 311px; height: 96px; }
.cursor { position: absolute; left: 1046px; top: 733px; }
</style>
